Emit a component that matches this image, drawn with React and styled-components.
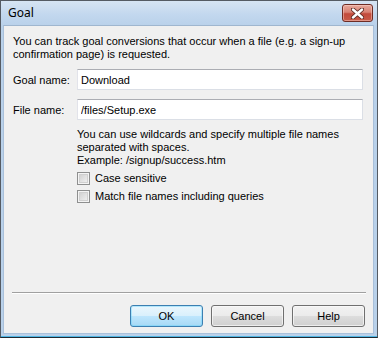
import React from "react";
import styled, { createGlobalStyle } from "styled-components";

const Global = createGlobalStyle`
  html, body { margin: 0; padding: 0; background: #b9d1ea; }
  body { width: 378px; height: 338px; overflow: hidden; }
  * { box-sizing: border-box; }
`;

const Window = styled.div`
  width: 378px;
  height: 338px;
  display: flex;
  flex-direction: column;
  border: 1px solid #555b63;
  border-bottom-color: #1f2a33;
  background: linear-gradient(#d6e4f3 0px, #c2d7ee 14px, #b9d1ea 25px, #b9d1ea 100%);
  padding: 0 3px 3px 2px;
  box-shadow: inset 0 -1px 0 #4fb6e3;
  font-family: "Liberation Sans", Arial, sans-serif;
  font-size: 11px;
  color: #000;
`;

const TitleBar = styled.div`
  height: 24px;
  display: flex;
  align-items: center;
  justify-content: space-between;
  padding: 0 1px 1px 5px;
`;

const TitleText = styled.span`
  font-family: "Noto Sans", "Open Sans", sans-serif;
  font-size: 12px;
  color: #000;
  padding-bottom: 1px;
`;

const CloseButton = styled.div`
  width: 31px;
  height: 18px;
  margin-top: 1px;
  border: 1px solid #6e2c24;
  border-radius: 3px;
  background: linear-gradient(#e8a99c 0%, #d88173 45%, #c24a3b 55%, #c85a48 100%);
  box-shadow: inset 0 0 0 1px rgba(255, 220, 210, 0.45);
  display: flex;
  align-items: center;
  justify-content: center;
`;

const Panel = styled.div`
  flex: 1;
  background: #f0f0f0;
  border: 1px solid #a9c0da;
  border-top-color: #9fb6cf;
  display: flex;
  flex-direction: column;
  padding: 9px 7px 6px 7px;
`;

const Intro = styled.p`
  margin: 0 0 0 2px;
  line-height: 13px;
  width: 340px;
`;

const Form = styled.div`
  display: grid;
  grid-template-columns: 64px 286px;
  row-gap: 9px;
  align-items: center;
  margin: 8px 0 0 2px;
`;

const Label = styled.label`
  line-height: 13px;
  padding-top: 1px;
`;

const TextBox = styled.input`
  height: 21px;
  width: 286px;
  border: 1px solid #dbdfe6;
  border-top-color: #abadb3;
  border-left-color: #e2e3ea;
  background: #fff;
  padding: 0 3px;
  font: inherit;
  color: #000;
  outline: none;
`;

const Hint = styled.p`
  margin: 8px 0 0 66px;
  line-height: 13px;
  width: 280px;
`;

const Checks = styled.div`
  display: flex;
  flex-direction: column;
  gap: 5px;
  margin: 5px 0 0 66px;
`;

const CheckRow = styled.label`
  display: flex;
  align-items: center;
  gap: 5px;
  height: 13px;
  line-height: 13px;
`;

const Box = styled.span`
  width: 13px;
  height: 13px;
  border: 1px solid #8e8f8f;
  background: #f4f4f4;
  box-shadow: inset 0 0 0 1px #f4f4f4, inset 0 0 0 2px #d0d0d0;
  background-image: linear-gradient(135deg, #cbcbcb, #f6f6f6);
  background-clip: content-box;
  padding: 2px;
  flex: none;
`;

const Spacer = styled.div`
  flex: 1;
`;

const Separator = styled.hr`
  margin: 0 0 11px 1px;
  border: none;
  height: 2px;
  border-top: 1px solid #a0a0a0;
  border-bottom: 1px solid #ffffff;
`;

const ButtonRow = styled.div`
  display: flex;
  justify-content: flex-end;
  gap: 8px;
  padding-right: 1px;
`;

const Button = styled.button`
  width: 73px;
  height: 22px;
  border-radius: 3px;
  font: inherit;
  color: #000;
  padding: 0;
  border: 1px solid ${(p) => (p.$default ? "#3c7fb1" : "#707070")};
  background: ${(p) =>
    p.$default
      ? "linear-gradient(#eaf6fd 0%, #d9f0fc 50%, #bee6fd 50%, #a7d9f5 100%)"
      : "linear-gradient(#f2f2f2 0%, #ebebeb 50%, #dddddd 50%, #cfcfcf 100%)"};
  box-shadow: inset 0 0 0 1px ${(p) => (p.$default ? "#5fd3fb66" : "#fcfcfcaa")};
`;

function CloseGlyph() {
  return (
    <svg width="13" height="11" viewBox="0 0 13 11">
      <path
        d="M2 1.5 L11 9.5 M11 1.5 L2 9.5"
        stroke="#5a2a24"
        strokeWidth="4.2"
        strokeLinecap="round"
        fill="none"
      />
      <path
        d="M2 1.5 L11 9.5 M11 1.5 L2 9.5"
        stroke="#ffffff"
        strokeWidth="2.4"
        strokeLinecap="round"
        fill="none"
      />
    </svg>
  );
}

export default function App() {
  return (
    <>
      <Global />
      <Window>
        <TitleBar>
          <TitleText>Goal</TitleText>
          <CloseButton>
            <CloseGlyph />
          </CloseButton>
        </TitleBar>
        <Panel>
          <Intro>
            You can track goal conversions that occur when a file (e.g. a sign-up
            confirmation page) is requested.
          </Intro>
          <Form>
            <Label>Goal name:</Label>
            <TextBox defaultValue="Download" />
            <Label>File name:</Label>
            <TextBox defaultValue="/files/Setup.exe" />
          </Form>
          <Hint>
            You can use wildcards and specify multiple file names separated with spaces.
            <br />
            Example: /signup/success.htm
          </Hint>
          <Checks>
            <CheckRow>
              <Box />
              Case sensitive
            </CheckRow>
            <CheckRow>
              <Box />
              Match file names including queries
            </CheckRow>
          </Checks>
          <Spacer />
          <Separator />
          <ButtonRow>
            <Button $default>OK</Button>
            <Button>Cancel</Button>
            <Button>Help</Button>
          </ButtonRow>
        </Panel>
      </Window>
    </>
  );
}
